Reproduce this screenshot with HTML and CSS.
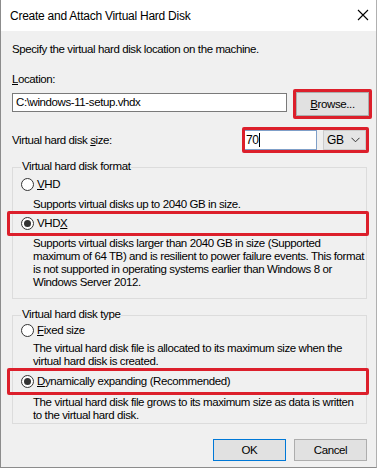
FILE: index.html
```html
<!DOCTYPE html>
<html>
<head>
<meta charset="utf-8">
<link rel="stylesheet" href="styles.css">
</head>
<body>
<div class="window">
  <div class="titlebar">
    <span class="title">Create and Attach Virtual Hard Disk</span>
    <svg class="close" width="12" height="12" viewBox="0 0 12 12"><path d="M1 1 L11 11 M11 1 L1 11" stroke="#000" stroke-width="1.1" fill="none"/></svg>
  </div>
  <div class="content">
    <div class="line intro">Specify the virtual hard disk location on the machine.</div>
    <div class="line loc-label"><u>L</u>ocation:</div>
    <div class="loc-row">
      <div class="textbox">C:\windows-11-setup.vhdx</div>
      <div class="hl browse-hl"><div class="btn browse"><u>B</u>rowse...</div></div>
    </div>
    <div class="size-row">
      <div class="line">Virtual hard disk <u>s</u>ize:</div>
      <div class="hl size-hl">
        <div class="numbox">70<span class="caret"></span></div>
        <div class="combo"><span>GB</span><svg width="9" height="6" viewBox="0 0 9 6"><path d="M0.5 0.8 L4.5 4.8 L8.5 0.8" stroke="#333" stroke-width="1" fill="none"/></svg></div>
      </div>
    </div>

    <div class="group group1">
      <div class="line group-title">Virtual hard disk format</div>
      <div class="radio-row vhd"><span class="radio"></span><span class="line"><u>V</u>HD</span></div>
      <div class="line desc d1">Supports virtual disks up to 2040 GB in size.</div>
      <div class="hl row-hl vhdx-hl">
        <div class="radio-row"><span class="radio checked"></span><span class="line">VHD<u>X</u></span></div>
      </div>
      <div class="line desc d2">Supports virtual disks larger than 2040 GB in size (Supported<br>maximum of 64 TB) and is resilient to power failure events. This format<br>is not supported in operating systems earlier than Windows 8 or<br>Windows Server 2012.</div>
    </div>

    <div class="group group2">
      <div class="line group-title">Virtual hard disk type</div>
      <div class="radio-row fixed"><span class="radio"></span><span class="line"><u>F</u>ixed size</span></div>
      <div class="line desc d3">The virtual hard disk file is allocated to its maximum size when the<br>virtual hard disk is created.</div>
      <div class="hl row-hl dyn-hl">
        <div class="radio-row"><span class="radio checked"></span><span class="line"><u>D</u>ynamically expanding (Recommended)</span></div>
      </div>
      <div class="line desc d4">The virtual hard disk file grows to its maximum size as data is written<br>to the virtual hard disk.</div>
    </div>

    <div class="buttons">
      <div class="btn ok">OK</div>
      <div class="btn cancel">Cancel</div>
    </div>
  </div>
</div>
</body>
</html>
```

FILE: styles.css
```css
html, body {
  margin: 0;
  padding: 0;
  background: #ffffff;
}
body {
  font-family: "Liberation Sans", Arial, sans-serif;
  font-size: 11.5px;
  letter-spacing: -0.4px;
  color: #000;
}
.window {
  width: 377px;
  height: 468px;
  border-left: 1px solid #8c8c8c;
  border-right: 1px solid #b0b0b0;
  border-bottom: 1px solid #8c8c8c;
  background: #f0f0f0;
  box-sizing: border-box;
  overflow: hidden;
}
.titlebar {
  height: 31px;
  background: #ffffff;
  display: flex;
  align-items: center;
  justify-content: space-between;
  padding: 0 7px 0 9px;
}
.title {
  font-size: 12px;
  letter-spacing: -0.25px;
  line-height: 14px;
}
.close {
  display: block;
  margin-top: -1px;
}
.content {
  padding: 0 9px 0 11px;
}
.line {
  line-height: 13px;
  white-space: nowrap;
}
u {
  text-decoration: underline;
  text-underline-offset: 1px;
}
.intro {
  padding-top: 12px;
}
.loc-label {
  margin-top: 17px;
}
.loc-row {
  display: flex;
  align-items: flex-start;
  margin-top: 3px;
  gap: 6px;
}
.textbox {
  width: 275px;
  height: 19px;
  flex-shrink: 0;
  box-sizing: border-box;
  margin-top: 4px;
  background: #fff;
  border: 1px solid #7a7a7a;
  line-height: 17px;
  padding-left: 3px;
}
.hl {
  border: 3px solid #dc1f2b;
  border-radius: 2px;
  box-sizing: border-box;
}
.browse-hl {
  width: 79px;
  height: 30px;
  flex-shrink: 0;
  padding: 0;
}
.btn {
  background: #e1e1e1;
  border: 1px solid #adadad;
  box-sizing: border-box;
  display: flex;
  align-items: center;
  justify-content: center;
}
.browse {
  height: 24px;
  width: 73px;
}
.size-row {
  display: flex;
  align-items: center;
  justify-content: space-between;
  margin-top: 8px;
  margin-right: -2px;
}
.size-hl {
  width: 127px;
  height: 26px;
  display: flex;
  align-items: center;
  gap: 6px;
}
.numbox {
  width: 72px;
  height: 20px;
  box-sizing: border-box;
  background: #fff;
  border: 1px solid #7f9fc8;
  border-left: none;
  display: flex;
  align-items: center;
  padding-left: 1px;
  font-size: 12px;
}
.caret {
  display: inline-block;
  width: 1px;
  height: 14px;
  background: #000;
}
.combo {
  flex: 1;
  height: 20px;
  box-sizing: border-box;
  background: #e5e5e5;
  border: 1px solid #cccccc;
  display: flex;
  align-items: center;
  justify-content: space-between;
  padding: 0 5px 0 3px;
  font-size: 12px;
}
.combo svg {
  display: block;
}
.group {
  border: 1px solid #dcdcdc;
  padding: 0 0 0 8px;
}
.group1 {
  margin-top: 14px;
  padding-bottom: 9px;
}
.group2 {
  margin-top: 16px;
  padding-bottom: 1px;
}
.group-title {
  margin-top: -8px;
  width: fit-content;
  padding: 0 1px;
  background: #f0f0f0;
}
.radio-row {
  display: flex;
  align-items: center;
  gap: 3px;
  height: 13px;
}
.radio {
  width: 13px;
  height: 13px;
  box-sizing: border-box;
  border: 1px solid #333;
  border-radius: 50%;
  background: #fff;
  display: flex;
  align-items: center;
  justify-content: center;
  flex-shrink: 0;
}
.radio.checked::after {
  content: "";
  width: 7px;
  height: 7px;
  border-radius: 50%;
  background: #333;
}
.vhd {
  margin-top: 5px;
}
.fixed {
  margin-top: 3px;
}
.desc {
  padding-left: 12px;
}
.d1 {
  margin-top: 7px;
}
.row-hl {
  margin-left: -14px;
  margin-right: -3px;
  padding-left: 11px;
  display: flex;
  align-items: center;
}
.vhdx-hl {
  height: 25px;
}
.d2 {
  margin-top: 1px;
}
.d3 {
  margin-top: 5px;
}
.dyn-hl {
  height: 27px;
}
.d4 {
  margin-top: 1px;
}
.buttons {
  display: flex;
  justify-content: flex-end;
  gap: 8px;
  margin-top: 15px;
}
.buttons .btn {
  width: 73px;
  height: 22px;
}
.ok {
  border-color: #0078d7 !important;
}
```
